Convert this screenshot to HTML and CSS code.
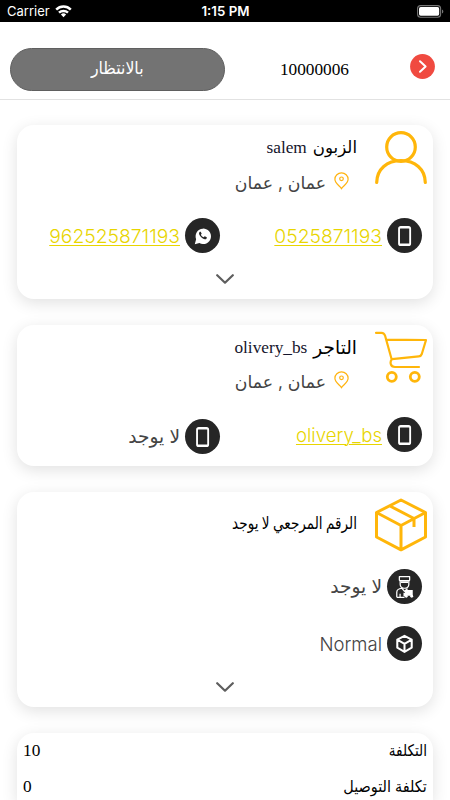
FILE: index.html
```html
<!DOCTYPE html>
<html lang="ar" dir="rtl">
<head>
<meta charset="utf-8">
<title>10000006</title>
<link rel="stylesheet" href="styles.css">
</head>
<body>
<svg class="defs" width="0" height="0" aria-hidden="true">
  <symbol id="phone" viewBox="0 0 34 34"><rect x="11.700" y="8.700" width="10.800" height="17.600" rx="1.600" fill="none" stroke="#fff" stroke-width="1.800"/><path d="M12 9.500h10.200M12 25.500h10.200" stroke="#fff" stroke-width="1.600"/></symbol>
  <symbol id="pin" viewBox="0 0 15 18"><path d="M7.500 16.600C5.800 13.800.9 11.400.9 7.300a6.600 6.400 0 0 1 13.200 0c0 4.100-4.900 6.500-6.600 9.300z" fill="none" stroke="#ffb30f" stroke-width="1.200"/><circle cx="7.500" cy="6.800" r="1.800" fill="none" stroke="#ffb30f" stroke-width="1.200"/></symbol>
  <symbol id="chevron" viewBox="0 0 18 10"><path d="M1.200 1.200 9 8.700l7.800-7.500" fill="none" stroke="#5e5e5e" stroke-width="2.200" stroke-linecap="round" stroke-linejoin="round"/></symbol>
</svg>
<header class="status" dir="ltr">
  <div class="carrier"><span>Carrier</span>
    <svg width="17" height="13" viewBox="0 0 17 13"><g fill="none" stroke="#fff" stroke-width="2.500"><path d="M1.200 4.600a10.400 10.400 0 0 1 14.600 0"/><path d="M4 7.700a6.500 6.500 0 0 1 9 0"/></g><path d="M5.900 9.600a3.700 3.700 0 0 1 5.200 0L8.500 12.300z" fill="#fff"/></svg>
  </div>
  <div class="clock">1:15 PM</div>
  <div class="battery"><svg width="27" height="13" viewBox="0 0 27 13"><rect x=".6" y=".6" width="23" height="11.600" rx="3" fill="none" stroke="#777" stroke-width="1.100"/><rect x="2" y="2" width="20.200" height="8.800" rx="1.700" fill="#fff"/><path d="M25 4.400c1.800.7 1.800 3.300 0 4z" fill="#777"/></svg></div>
</header>
<nav class="topbar">
  <svg class="back" width="25" height="25" viewBox="0 0 25 25"><circle cx="12.500" cy="12.500" r="12.400" fill="#f04a40"/><path d="m10 7.200 5.600 5.300-5.600 5.300" fill="none" stroke="#fff" stroke-width="2" stroke-linecap="round" stroke-linejoin="round"/></svg>
  <div class="order">10000006</div>
  <div class="state"><span>بالانتظار</span></div>
</nav>
<main>
  <section class="card customer">
    <div class="head">
      <svg class="big" viewBox="0 0 52 54"><g fill="none" stroke="#ffb60a" stroke-width="3.200" stroke-linecap="round"><circle cx="26" cy="16" r="14.300"/><path d="M1.700 51.500C2 38 12 29.700 26 29.700S50 38 50.300 51.500"/></g></svg>
      <div class="info">
        <h2><span>الزبون</span> <span class="name">salem</span></h2>
        <p><svg width="15" height="18"><use href="#pin"/></svg><span class="city">عمان , عمان</span></p>
      </div>
    </div>
    <div class="contacts">
      <div class="contact"><i class="dot"><svg><use href="#phone"/></svg></i><a class="num">0525871193</a></div>
      <div class="contact"><i class="dot"><svg viewBox="0 0 34 34"><path d="M9.500 25.600 10.800 20.600A7.500 7.500 0 1 1 14 24.300z" fill="#fff"/><path d="M14.400 13.400c-1.400 1-.8 3 .9 4.900 2 2.200 4.500 3.200 5.700 1.500l.2-1-2-1.100-1.200 1c-1.200-.5-2.100-1.400-2.600-2.500l.8-1-.9-1.900z" fill="#262626"/></svg></i><a class="num">962525871193</a></div>
    </div>
    <svg class="more" width="18" height="10"><use href="#chevron"/></svg>
  </section>
  <section class="card merchant">
    <div class="head">
      <svg class="big" viewBox="0 0 52 54"><g fill="none" stroke="#ffb60a" stroke-width="2.200" stroke-linecap="round" stroke-linejoin="round"><path d="M1 1.800h5.500c2 0 3 1 3.600 3l6.600 23.700c-1.700 2-1.900 7.500 3.300 7.500h24M11 8.700l40 .3-4.200 14c-.6 1.600-1.200 2.200-3 2.400L17 28.200"/></g><g fill="none" stroke="#ffb60a" stroke-width="2.800"><circle cx="16.800" cy="45.800" r="4.500"/><circle cx="39.800" cy="45.800" r="4.500"/></g></svg>
      <div class="info">
        <h2><span>التاجر</span> <span class="name">olivery_bs</span></h2>
        <p><svg width="15" height="18"><use href="#pin"/></svg><span class="city">عمان , عمان</span></p>
      </div>
    </div>
    <div class="contacts">
      <div class="contact"><i class="dot"><svg><use href="#phone"/></svg></i><a class="num user">olivery_bs</a></div>
      <div class="contact lower"><i class="dot"><svg><use href="#phone"/></svg></i><span class="none">لا يوجد</span></div>
    </div>
  </section>
  <section class="card parcel">
    <div class="head">
      <svg class="big" viewBox="0 0 52 54"><path d="M26 2 50.500 14.500V39L26 51.800 1.500 39V14.500zM1.500 14.500 26 27.500l24.500-13M26 27.500v24M15 8l24 12.500V29" fill="none" stroke="#ffb60a" stroke-width="3" stroke-linejoin="round"/></svg>
      <div class="info"><h2><span class="reference">الرقم المرجعي لا يوجد</span></h2></div>
    </div>
    <div class="contact"><i class="dot"><svg viewBox="0 0 34 34"><g fill="none" stroke="#fff" stroke-width="1.200" stroke-linejoin="round"><path d="M12 7.500h10v3.300l-.8 1v3.300c0 2-1.800 3.600-4.200 3.600s-4.200-1.600-4.200-3.600v-3.300l-.8-1z"/><path d="M12.500 11.200h9M9.500 27.500v-5c0-2.300 1.800-3.400 5-3.800l2.500 3 3-2.500M9.500 27.500H17M12.700 24v3.500"/></g><path d="M13.500 12h7v1.600h-7zM17.500 20.500h7.500v5.500h-7.500zM16 23h3v3.500h-3z" fill="#fff"/><circle cx="18.700" cy="26.500" r="1.400" fill="#fff"/><circle cx="24" cy="26.500" r="1.400" fill="#fff"/></svg></i><span class="none">لا يوجد</span></div>
    <div class="contact"><i class="dot"><svg viewBox="0 0 34 34"><path d="m17 9.600 7 3.700v7.800l-7 4-7-4v-7.800zM10 13.300l7 4 7-4M17 17.300v7.800" fill="none" stroke="#fff" stroke-width="2" stroke-linejoin="round"/></svg></i><span class="normal">Normal</span></div>
    <svg class="more" width="18" height="10"><use href="#chevron"/></svg>
  </section>
  <section class="card costs">
    <div class="cost"><span class="total">التكلفة</span><b>10</b></div>
    <div class="cost"><span class="delivery">تكلفة التوصيل</span><b>0</b></div>
  </section>
</main>
</body>
</html>
```

FILE: styles.css
```css
* { box-sizing: border-box; }
body {
  margin: 0;
  height: 800px;
  overflow: hidden;
  background: #fff;
  font-family: Inter, "Noto Sans", "DejaVu Sans", sans-serif;
}
.defs { position: absolute; }
svg { display: block; flex: none; }
.status {
  display: grid;
  grid-template-columns: 1fr auto 1fr;
  align-items: center;
  height: 22px;
  padding: 0 6px 0 7px;
  background: #000;
  color: #fff;
  font-size: 13px;
  line-height: 22px;
}
.carrier { display: flex; align-items: center; gap: 5px; }
.clock { font-weight: 600; font-size: 13.300px; }
.battery { display: flex; justify-content: flex-end; }
.topbar {
  display: flex;
  align-items: flex-start;
  height: 78px;
  padding: 26px 15px 0 10px;
  border-bottom: 1px solid #e2e2e2;
}
.back { margin-top: 6px; }
.order {
  margin: 10px 61px 0 0;
  font: 17.300px/24px "Liberation Serif", serif;
}
.state {
  display: flex;
  justify-content: center;
  width: 215px;
  height: 43px;
  margin-right: 55px;
  border: 1px solid #5f5f5f;
  border-radius: 22px;
  background: #737373;
  color: #fff;
  font-size: 17.500px;
  line-height: 38px;
}
.state span { transform: scaleX(.9); }
main { padding: 25px 17px 0; }
.card {
  margin-bottom: 26px;
  padding: 6px 6px 0;
  border-radius: 17px;
  background: #fff;
  box-shadow: 0 4px 16px rgba(0, 0, 0, .12);
}
.customer { height: 174px; }
.merchant { height: 141px; }
.parcel { height: 215px; }
.head { display: flex; gap: 18px; height: 87px; }
.merchant .head { height: 86px; }
.big { width: 52px; height: 54px; }
.info { white-space: nowrap; }
h2 {
  display: flex;
  align-items: center;
  gap: 6px;
  height: 34px;
  margin: 0;
  font: 17.300px/34px "Liberation Serif", "DejaVu Sans", serif;
  color: #000;
}
h2 span:first-child { font-size: 16.600px; }
.merchant h2 span:first-child { font-size: 18.500px; }
.name { color: #15152b; }
p {
  display: flex;
  align-items: center;
  gap: 8px;
  height: 31px;
  margin: 0;
  padding-right: 8px;
  color: #444;
}
.merchant p { height: 29px; }
.city { margin-top: 4px; font-size: 17.300px; }
.contacts { display: grid; grid-template-columns: 202px 1fr; }
.contact { display: flex; align-items: center; gap: 5px; height: 35px; padding-right: 5px; color: #444; }
.lower { margin-top: 2px; }
.dot { width: 35px; height: 35px; border-radius: 50%; background: #262626; flex: none; }
.dot svg { width: 35px; height: 35px; }
.num {
  font-size: 19.300px;
  font-weight: 300;
  color: #e8d500;
  text-decoration: underline;
  text-decoration-thickness: 1px;
  text-underline-offset: 2px;
}
.user { font-size: 18.600px; }
.none { margin-top: -2px; font-size: 18.600px; }
.normal { font-size: 18.500px; font-weight: 300; }
.more { margin: 21px auto 0; }
.parcel .head { height: 71px; }
.parcel h2 { height: 51px; }
.parcel h2 .reference { width: 126px; font-size: 17px; transform: scaleX(.8); transform-origin: right; }
.parcel .contact + .contact { margin-top: 22px; }
.costs { height: 68px; margin: 0; padding: 0 6px; border-radius: 17px 17px 0 0; }
.cost { display: flex; justify-content: space-between; align-items: center; height: 36px; font-size: 16px; }
.cost:nth-child(2) { height: 32px; padding-top: 4px; }
.cost span { margin-top: -3px; line-height: 20px; transform-origin: right; }
.total { transform: scaleX(.85); }
.delivery { transform: scaleX(.9); }
.cost b { font: 17.300px/20px "Liberation Serif", serif; }
```
